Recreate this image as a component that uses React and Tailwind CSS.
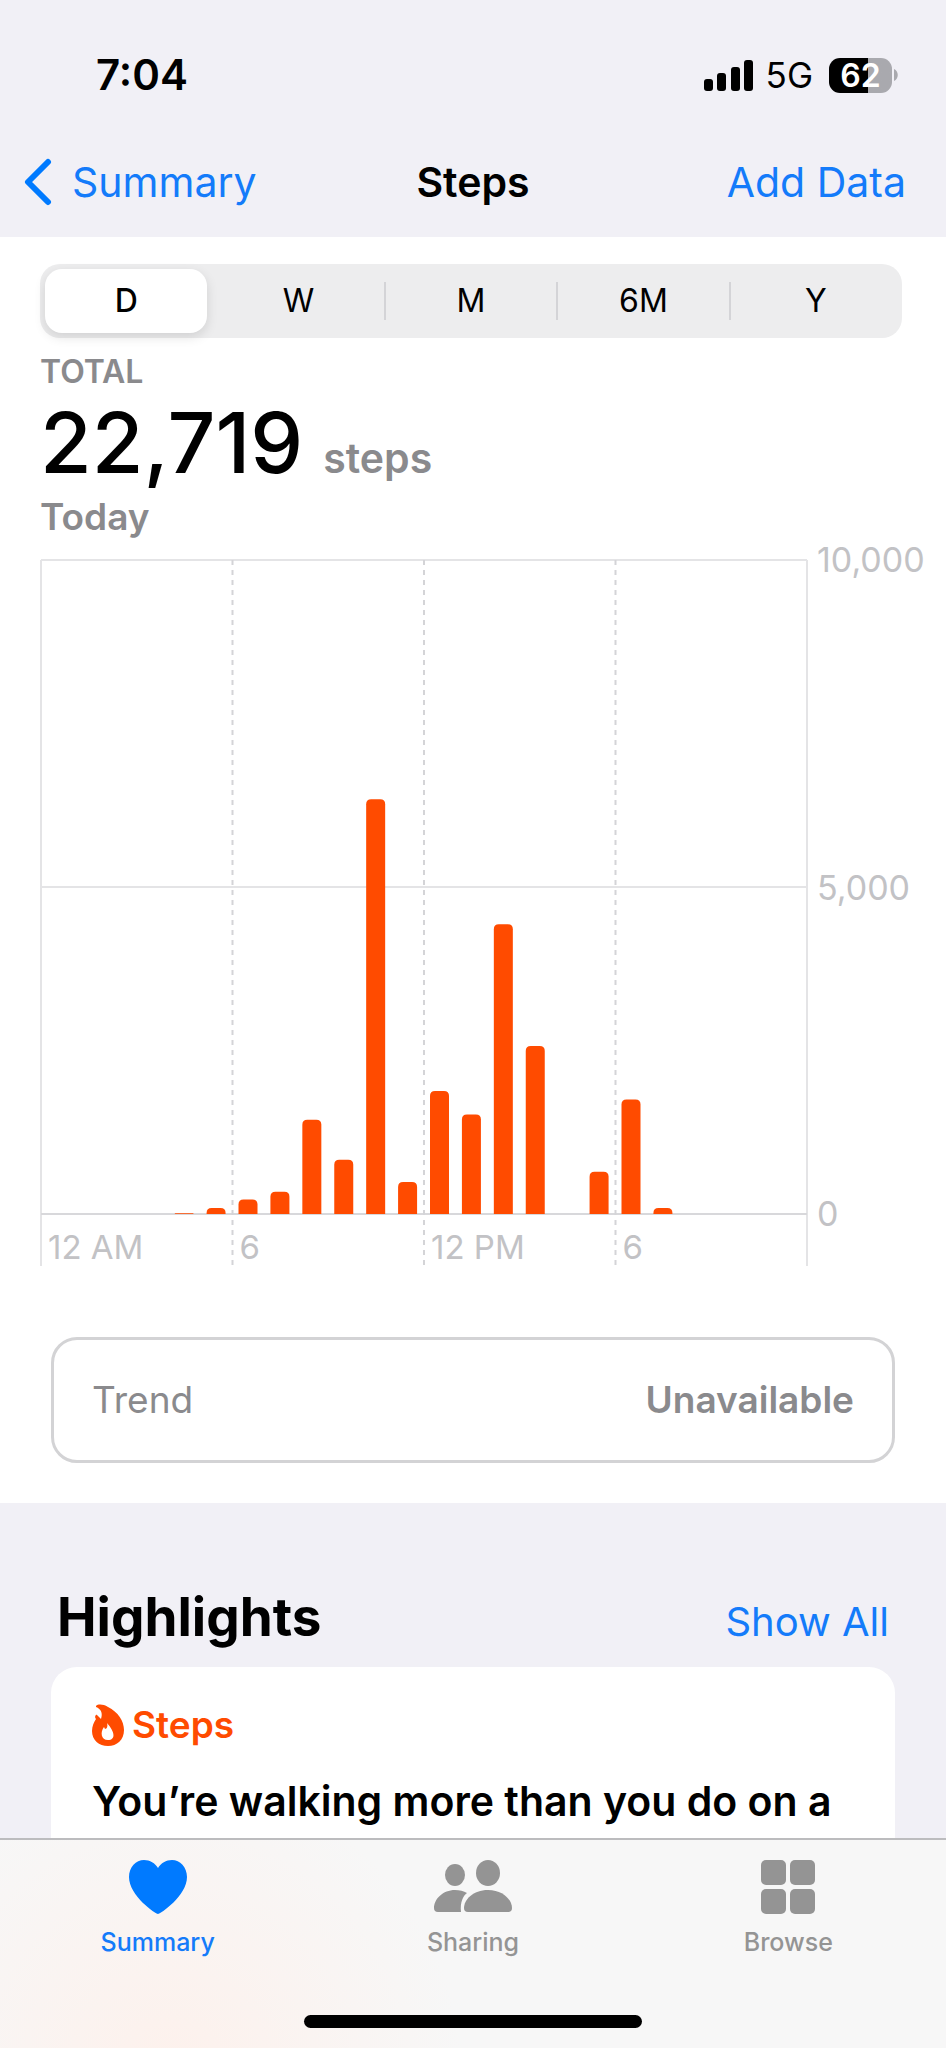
import React, { useState } from "react";

const ranges = ["D", "W", "M", "6M", "Y"];

// steps per hour, starting at 12 AM
const hours = [0, 0, 0, 0, 12, 90, 220, 340, 1440, 830, 6340, 490, 1880, 1520, 4430, 2570, 0, 645, 1750, 90, 0, 0, 0, 0];

const CHART = { left: 1, right: 767, top: 21, bottom: 675, foot: 727, max: 10000 };

const StatusBar = () => {
    return (
        <div className="flex items-center justify-between pl-24 pr-12 pt-12 h-[102px]">
            <span className="text-[42px] leading-[54px] font-semibold">7:04</span>
            <div className="flex items-center">
                <svg className="w-[50px] h-8" viewBox="0 0 50 32">
                    <rect x="0" y="20" width="9" height="12" rx="3" />
                    <rect x="13" y="14" width="9" height="18" rx="3" />
                    <rect x="27" y="8" width="9" height="24" rx="3" />
                    <rect x="40" y="1" width="9" height="31" rx="3" />
                </svg>
                <span className="ml-3 text-[35px] leading-10">5G</span>
                <div className="ml-4 w-[63px] h-[35px] rounded-[11px] bg-linear-to-r from-black from-62% to-[#a9a9ae] to-62% text-white text-[32px] leading-[35px] font-semibold text-center">
                    62
                </div>
                <svg className="ml-[2px] w-1 h-3" viewBox="0 0 4 12">
                    <path d="M0 0C5 2 5 10 0 12Z" fill="#a9a9ae" />
                </svg>
            </div>
        </div>
    )
}

const NavBar = () => {
    return (
        <div className="grid grid-cols-3 items-center px-6 h-[135px] pt-6 text-[41px] leading-[52px]">
            <a href="#summary" className="flex items-center text-[#147bfa]">
                <svg className="w-[28px] h-12 mr-5" viewBox="0 0 28 48" fill="none" stroke="#007aff" strokeWidth="6" strokeLinecap="round" strokeLinejoin="round">
                    <path d="M24 4L4 24L24 44" />
                </svg>
                Summary
            </a>
            <h1 className="text-center font-semibold">Steps</h1>
            <button className="justify-self-end mr-4 text-[#147bfa] whitespace-nowrap">Add Data</button>
        </div>
    )
}

const RangePicker = () => {
    const [selected, setSelected] = useState("D");

    return (
        <div className="flex items-center h-[74px] rounded-[20px] bg-[#ededee] p-[5px]">
            {ranges.map((range, i) => (
                <React.Fragment key={range}>
                    {i > 0 && <div className={i > 1 ? "w-[2px] h-[38px] mx-1 bg-[#d4d4d7]" : "w-[2px] mx-1"}></div>}
                    <button
                        onClick={() => setSelected(range)}
                        className={
                            range === selected
                                ? "flex-1 h-16 rounded-[17px] bg-white shadow-[0_4px_12px_rgba(0,0,0,0.12)] text-[32px] font-medium"
                                : "flex-1 h-16 rounded-[17px] text-[32px]"
                        }
                    >
                        {range}
                    </button>
                </React.Fragment>
            ))}
        </div>
    )
}

const StepsChart = () => {
    const { left, right, top, bottom, foot, max } = CHART;
    const slot = (right - left) / 24;
    const labels = [["12 AM", 0], ["6", 6], ["12 PM", 12], ["6", 18]];

    return (
        <svg className="block w-full" viewBox="0 0 906 736" role="img" aria-label="Steps by hour">
            <g stroke="#e4e4e6" strokeWidth="2">
                <path d={`M${left} ${top}H${right}`} />
                <path d={`M${left} ${(top + bottom) / 2}H${right}`} />
                <path d={`M${left} ${top}V${foot}`} />
                <path d={`M${right} ${top}V${foot}`} />
                <path d={`M${left} ${bottom}H${right}`} stroke="#d8d8db" />
            </g>
            <g stroke="#d4d4d7" strokeWidth="2" strokeDasharray="5 5">
                {[6, 12, 18].map((h) => (
                    <path key={h} d={`M${left + h * slot} ${top}V${foot}`} />
                ))}
            </g>
            {hours.map((steps, h) => {
                if (steps === 0) return null;
                const height = (steps / max) * (bottom - top);
                const x = left + h * slot + 6;
                const r = Math.min(5, height);
                return (
                    <path
                        key={h}
                        fill="#ff4b00"
                        d={`M${x} ${bottom}V${bottom - height + r}q0 ${-r} ${r} ${-r}h${19 - 2 * r}q${r} 0 ${r} ${r}V${bottom}Z`}
                    />
                );
            })}
            <g fill="#c2c2c5" fontSize="34">
                {labels.map(([text, h]) => (
                    <text key={h} x={left + h * slot + 7} y="720" fontSize="33">{text}</text>
                ))}
                <text x="777" y="33">10,000</text>
                <text x="777" y="361">5,000</text>
                <text x="777" y="687">0</text>
            </g>
        </svg>
    )
}

const Flame = () => {
    return (
        <svg className="w-8 h-[42px]" viewBox="0 0 32 42">
            <path
                fill="#ff4b00"
                fillRule="evenodd"
                d="M4 2C6 0 11 0 16 3C26 8 32 17 32 26C32 36 25 42 16 42C7 42 0 36 0 27C0 22 2 18 4 15C2 13 4 10 5 11L9 15C11 9 9 5 4 3ZM15 19C16 22 15 25 13 25L12 23C8 28 9 36 16 36C24 36 23 28 15 19Z"
            />
        </svg>
    )
}

const TabBar = () => {
    return (
        <nav className="border-t-2 border-[#bcbcbe] bg-[#f7f7f7] bg-[radial-gradient(circle_at_18%_110%,#fdf1ec,#f7f7f7_36%)] h-[210px] flex flex-col justify-between">
            <div className="grid grid-cols-3 pt-5 text-[25px] leading-8 font-medium text-[#949494]">
                <a href="#summary" className="flex flex-col items-center gap-3 text-[#147bfa]">
                    <svg className="w-[58px] h-[54px]" viewBox="0 0 58 54">
                        <path fill="#007aff" d="M29 54C27 54 0 36 0 17C0 7 7 0 15 0C21 0 26 3 29 8C32 3 37 0 43 0C51 0 58 7 58 17C58 36 31 54 29 54Z" />
                    </svg>
                    Summary
                </a>
                <a href="#sharing" className="flex flex-col items-center gap-3">
                    <svg className="w-[78px] h-[54px]" viewBox="0 0 78 54" fill="#949494">
                        <ellipse cx="21" cy="15" rx="10" ry="11" />
                        <ellipse cx="54" cy="13" rx="12" ry="13" />
                        <path d="M27 52H4Q0 52 0 48C0 39 9 30 21 30Q28 30 33 33C29 36 26 42 27 52Z" />
                        <path d="M34 52Q30 52 30 48C30 40 39 30 54 30C69 30 78 40 78 48Q78 52 74 52Z" />
                    </svg>
                    Sharing
                </a>
                <a href="#browse" className="flex flex-col items-center gap-3">
                    <svg className="w-[54px] h-[54px]" viewBox="0 0 54 54" fill="#949494">
                        <rect x="0" y="0" width="25" height="25" rx="5" />
                        <rect x="29" y="0" width="25" height="25" rx="5" />
                        <rect x="0" y="29" width="25" height="25" rx="5" />
                        <rect x="29" y="29" width="25" height="25" rx="5" />
                    </svg>
                    Browse
                </a>
            </div>
            <div className="w-[338px] h-[13px] mb-5 rounded-full bg-black self-center"></div>
        </nav>
    )
}

export default function App() {
    return (
        <div className="min-h-screen flex flex-col bg-[#f1f0f6] text-black font-['Inter','Liberation_Sans',sans-serif]">
            <header>
                <StatusBar />
                <NavBar />
            </header>
            <main className="flex-1 flex flex-col">
                <section className="bg-white pt-[27px] pb-10">
                    <div className="pl-10 pr-11">
                        <RangePicker />
                        <div className="pt-3 font-semibold text-[#8a8a8d]">
                            <p className="text-[32px] leading-11">TOTAL</p>
                            <p className="pt-3 flex items-baseline gap-5 leading-[74px]">
                                <span className="text-[84px] font-medium text-black">22,719</span>
                                <span className="text-[41px]">steps</span>
                            </p>
                            <p className="text-[37px] leading-11">Today</p>
                        </div>
                    </div>
                    <div className="pl-10">
                        <StepsChart />
                    </div>
                    <div className="mx-[51px] mt-[62px] px-[38px] h-[126px] flex items-center justify-between rounded-[26px] border-[3px] border-[#d3d3d5] text-[37px] text-[#8a8a8d]">
                        <span>Trend</span>
                        <span className="font-semibold">Unavailable</span>
                    </div>
                </section>
                <section className="flex-1 flex flex-col px-[51px] pt-20">
                    <div className="flex items-baseline justify-between px-[6px] pb-[15px]">
                        <h2 className="text-[53px] leading-[68px] font-bold">Highlights</h2>
                        <a href="#highlights" className="text-[40px] text-[#147bfa]">Show All</a>
                    </div>
                    <div className="flex-1 rounded-t-[26px] bg-white px-[41px] pt-9">
                        <div className="flex items-center gap-2">
                            <Flame />
                            <span className="text-[37px] leading-11 font-semibold text-[#ff4b00]">Steps</span>
                        </div>
                        <p className="pt-[29px] text-[41px] leading-[50px] font-semibold whitespace-nowrap">You’re walking more than you do on a</p>
                    </div>
                </section>
            </main>
            <TabBar />
        </div>
    )
}
